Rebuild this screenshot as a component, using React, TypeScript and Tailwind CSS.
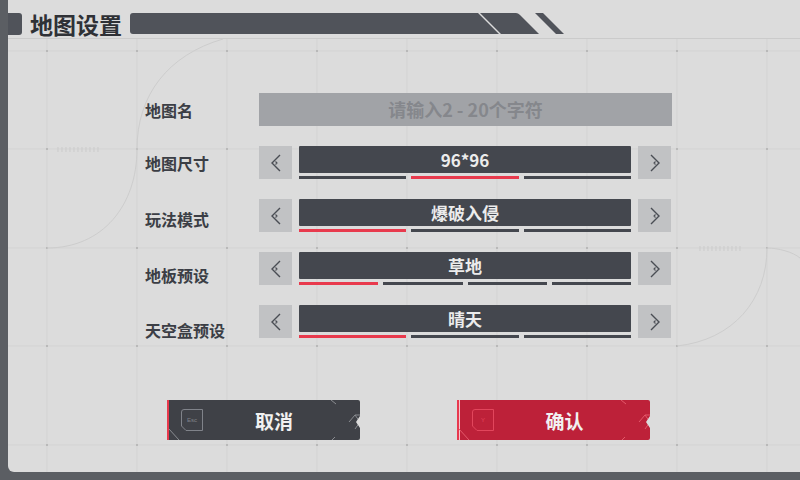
import React from "react";

const font = { fontFamily: '"Noto Sans CJK SC", "Noto Sans", sans-serif' };

type Row = { label: string; value: string; segs: number; active: number; labelShift: string };

const rows: Row[] = [
    { label: "地图尺寸", value: "96*96", segs: 3, active: 1, labelShift: "translate-y-[1px]" },
    { label: "玩法模式", value: "爆破入侵", segs: 3, active: 0, labelShift: "translate-y-[4px]" },
    { label: "地板预设", value: "草地", segs: 4, active: 0, labelShift: "translate-y-[7px]" },
    { label: "天空盒预设", value: "晴天", segs: 3, active: 0, labelShift: "translate-y-[9px]" },
];

function Chevron({ dir }: { dir: "left" | "right" }) {
    return (
        <svg width="14" height="20" viewBox="0 0 14 20" className={dir === "right" ? "rotate-180" : ""}>
            <polyline points="11,2 3,10 11,18" fill="none" stroke="#4a4d54" strokeWidth="1.4" />
            <polyline points="6.5,8.5 8,10 6.5,11.5" fill="none" stroke="#4a4d54" strokeWidth="1.1" />
        </svg>
    );
}

function ArrowBtn({ dir }: { dir: "left" | "right" }) {
    return (
        <div className="w-[33px] h-[33px] bg-[#c1c2c4] flex items-center justify-center shrink-0">
            <Chevron dir={dir} />
        </div>
    );
}

function Selector({ row }: { row: Row }) {
    return (
        <div className="flex items-start gap-[7px]">
            <ArrowBtn dir="left" />
            <div className="w-[332px] flex flex-col gap-[3px]">
                <div className="h-[27px] bg-[#44474e] rounded-[1px] flex items-center justify-center text-[17px] font-bold text-[#ececec] leading-none">
                    {row.value}
                </div>
                <div className="flex gap-[5px]">
                    {Array.from({ length: row.segs }).map((_, i) => (
                        <div
                            key={i}
                            className={"flex-1 h-[3px] " + (i === row.active ? "bg-[#e83a4d]" : "bg-[#44474e]")}
                        />
                    ))}
                </div>
            </div>
            <ArrowBtn dir="right" />
        </div>
    );
}

function KeyCap({ label, color }: { label: string; color: string }) {
    return (
        <div className="relative w-[22px] h-[22px] flex items-center justify-center">
            <svg width="22" height="22" viewBox="0 0 22 22" className="absolute inset-0">
                <path d="M3 0.5 H21.5 V21.5 H5 L0.5 17 V3 Q0.5 0.5 3 0.5 Z" fill="none" stroke={color} strokeWidth="1" />
            </svg>
            <span className="text-[6px] leading-none" style={{ color, fontFamily: '"Liberation Sans", sans-serif' }}>
                {label}
            </span>
        </div>
    );
}

function ActionButton({ text, cancel }: { text: string; cancel?: boolean }) {
    const bg = cancel ? "bg-[#3f4147]" : "bg-[#bd2139]";
    const line = cancel ? "#8a8c91" : "#e4596b";
    return (
        <div className={"relative w-[193px] h-[40px] flex items-center rounded-r-[2px] " + bg}>
            <div className={cancel ? "w-[2px] h-full bg-[#e83a4d]" : "w-[3px] h-full bg-[#e8394f] border-r border-[#f3c6cc]"} />
            <div className="ml-[12px]">
                <KeyCap label={cancel ? "Esc" : "Y"} color={cancel ? "#80838a" : "#e2465c"} />
            </div>
            <div className="flex-1 text-center text-[19px] font-bold text-[#f1f1f1] pr-[15px] leading-none">{text}</div>
            <svg width="193" height="40" viewBox="0 0 193 40" className="absolute inset-0 pointer-events-none">
                <line x1="164" y1="0" x2="169" y2="4" stroke={line} strokeWidth="1" />
                <line x1="2" y1="29" x2="12" y2="40" stroke={line} strokeWidth="1" />
                <line x1="165" y1="40" x2="168" y2="37" stroke={line} strokeWidth="1" />
                <polyline points="182,22 188,15 193,15" fill="none" stroke={line} strokeWidth="1" />
                <polyline points="188,15 193,22 188,29" fill="none" stroke={line} strokeWidth="1" />
                <polygon points="193,16 189,22 193,28" fill="#dcdcdc" />
            </svg>
        </div>
    );
}

function Backdrop() {
    const xs = [39, 129, 219, 309, 399, 489, 579, 669, 759];
    const ys = [51, 149, 248, 346, 445];
    return (
        <svg width="792" height="472" viewBox="0 0 792 472" className="absolute inset-0">
            {xs.map((x) => (
                <line key={"v" + x} x1={x} y1="39" x2={x} y2="472" stroke="#d3d3d3" strokeWidth="1" />
            ))}
            {ys.map((y) => (
                <line key={"h" + y} x1="0" y1={y} x2="792" y2={y} stroke="#d3d3d3" strokeWidth="1" />
            ))}
            {xs.map((x) =>
                ys.map((y) => <rect key={x + "-" + y} x={x - 1} y={y - 1} width="2" height="2" fill="#b9b9b9" />)
            )}
            <path d="M129 149 C129 95 160 55 215 39" fill="none" stroke="#cdcdcd" strokeWidth="1" />
            <path d="M129 149 C129 205 95 248 39 248" fill="none" stroke="#cdcdcd" strokeWidth="1" />
            <path d="M759 248 C759 300 725 340 669 346" fill="none" stroke="#cdcdcd" strokeWidth="1" />
            <path d="M759 248 C770 248 785 252 792 258" fill="none" stroke="#cdcdcd" strokeWidth="1" />
            {Array.from({ length: 11 }).map((_, i) => (
                <line key={"t" + i} x1={50 + i * 4} y1="147" x2={50 + i * 4} y2="152" stroke="#cbcbcb" strokeWidth="1" />
            ))}
            {Array.from({ length: 11 }).map((_, i) => (
                <line key={"r" + i} x1={692 + i * 4} y1="246" x2={692 + i * 4} y2="251" stroke="#cbcbcb" strokeWidth="1" />
            ))}
        </svg>
    );
}

export default function App() {
    return (
        <div className="w-[800px] h-[480px] bg-[#5b5e63] pl-[8px] pb-[8px] flex" style={font}>
            <div className="relative flex-1 bg-[#dcdcdc] rounded-bl-[6px] overflow-hidden flex flex-col">
                <Backdrop />

                {/* Header */}
                <div className="relative h-[39px] shrink-0 border-b border-[#cbcbcb] flex items-start pt-[13px]">
                    <div className="w-[14px] h-[22px] bg-[#50535a] rounded-r-[3px]" />
                    <div className="ml-[8px] text-[23px] font-bold text-[#2f3136] leading-[22px]">地图设置</div>
                    <svg width="440" height="22" viewBox="0 0 440 22" className="ml-[8px]">
                        <path d="M3 0 H348 L369 21 H3 Q0 21 0 18 V3 Q0 0 3 0 Z" fill="#50535a" />
                        <path d="M350 0 H386 Q388 0 390 2 L409 21 H371 Z" fill="#50535a" />
                        <path d="M405 0 H413 L434 21 H426 Z" fill="#50535a" />
                    </svg>
                </div>

                {/* Form */}
                <div className="relative ml-[137px] mt-[54px] flex flex-col gap-[20px]">
                    <div className="flex items-center">
                        <div className="w-[114px] text-[16px] font-bold text-[#3b3e45]">地图名</div>
                        <div className="w-[413px] h-[33px] bg-[#a1a3a7] flex items-center justify-center text-[18px] font-bold text-[#85878c]">
                            请输入2 - 20个字符
                        </div>
                    </div>
                    {rows.map((row) => (
                        <div key={row.label} className="flex items-start">
                            <div className={"w-[114px] text-[16px] font-bold text-[#3b3e45] leading-[33px] " + row.labelShift}>
                                {row.label}
                            </div>
                            <Selector row={row} />
                        </div>
                    ))}
                </div>

                {/* Actions */}
                <div className="relative ml-[159px] mt-[62px] flex gap-[97px]">
                    <ActionButton text="取消" cancel />
                    <ActionButton text="确认" />
                </div>
            </div>
        </div>
    );
}
